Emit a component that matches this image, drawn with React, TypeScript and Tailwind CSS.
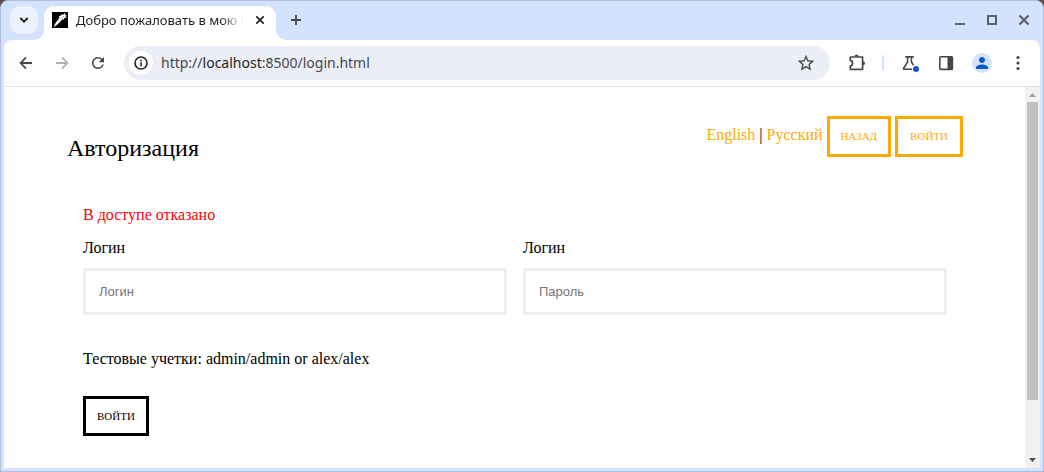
import React, { useState } from 'react';
import { MdRefresh, MdPerson, MdStarBorder } from 'react-icons/md';

interface ToolButtonProps {
  label: string;
  disabled?: boolean;
  children: React.ReactNode;
}

function ToolButton({ label, disabled, children }: ToolButtonProps) {
  return (
    <button
      type="button"
      aria-label={label}
      disabled={disabled}
      className="flex size-7 shrink-0 items-center justify-center rounded-full text-[#474747] disabled:text-[#b0b0b0]"
    >
      {children}
    </button>
  );
}

function Arrow({ flip = false }: { flip?: boolean }) {
  return (
    <svg width="16" height="16" viewBox="0 0 16 16" fill="none" stroke="currentColor" strokeWidth="1.8">
      <path d={flip ? 'M2 8H13M8 2.4L13.4 8L8 13.6' : 'M14 8H3M8 2.4L2.6 8L8 13.6'} />
    </svg>
  );
}

function Favicon() {
  return (
    <svg width="16" height="16" viewBox="0 0 16 16" className="shrink-0">
      <rect width="16" height="16" fill="#000" />
      <path d="M1.8 14.4L3.6 11L6.2 7.6L7.4 5.8L6.8 4.2L8.4 3.8L9.6 2.4L11 2.8L12.6 1.2L13.4 1.6L13 3L14.8 3.2L14 4.4L14.4 5.6L12.4 6L11.8 7.4L10 7.6L8.6 9.4L5.6 12.2L2.4 14.8Z" fill="#fff" />
      <path d="M8.8 5.2L10 6.4M11 4L11.8 4.8M6.6 8.8L7.4 9.4" stroke="#000" strokeWidth="0.5" />
    </svg>
  );
}

function TabStrip() {
  return (
    <div className="flex h-[39px] items-start pl-[9px] pt-[5px]">
      <button type="button" aria-label="Поиск вкладок" className="flex size-7 items-center justify-center rounded-[10px] bg-[#ebf1fd] text-[#1f1f1f]">
        <svg width="10" height="10" viewBox="0 0 10 10" fill="none" stroke="currentColor" strokeWidth="1.8">
          <path d="M1.3 3L5 6.7L8.7 3" />
        </svg>
      </button>
      <svg width="10" height="10" viewBox="0 0 10 10" className="-ml-1 self-end" fill="#fff">
        <path d="M10 0V10H0A10 10 0 0 0 10 0Z" />
      </svg>
      <div className="flex h-full w-58 items-center gap-2 rounded-t-[10px] bg-white px-2 pb-1.5">
        <Favicon />
        <span className="min-w-0 flex-1 overflow-hidden whitespace-nowrap text-[13px] leading-7 text-[#1f1f1f] [mask-image:linear-gradient(to_right,#000_86%,transparent)]">
          Добро пожаловать в мою программу
        </span>
        <button type="button" aria-label="Закрыть вкладку" className="flex size-4 items-center justify-center text-[#1f1f1f]">
          <svg width="10" height="10" viewBox="0 0 10 10" fill="none" stroke="currentColor" strokeWidth="1.7">
            <path d="M1.3 1.3L8.7 8.7M8.7 1.3L1.3 8.7" />
          </svg>
        </button>
      </div>
      <svg width="10" height="10" viewBox="0 0 10 10" className="self-end" fill="#fff">
        <path d="M0 0V10H10A10 10 0 0 1 0 0Z" />
      </svg>
      <button type="button" aria-label="Новая вкладка" className="-ml-1 flex size-7 items-center justify-center text-[#474747]">
        <svg width="12" height="12" viewBox="0 0 12 12" fill="none" stroke="currentColor" strokeWidth="1.8">
          <path d="M6 1V11M1 6H11" />
        </svg>
      </button>

      <div className="ml-auto flex gap-1 pr-[5px] text-[#5b6169]">
        <button type="button" aria-label="Свернуть" className="flex size-7 items-center justify-center">
          <svg width="12" height="12" viewBox="0 0 12 12" fill="currentColor">
            <path d="M1 9H11V11H1Z" />
          </svg>
        </button>
        <button type="button" aria-label="Развернуть" className="flex size-7 items-center justify-center">
          <svg width="12" height="12" viewBox="0 0 12 12" fill="none" stroke="currentColor" strokeWidth="2">
            <path d="M2 2H10V10H2Z" />
          </svg>
        </button>
        <button type="button" aria-label="Закрыть" className="flex size-7 items-center justify-center">
          <svg width="12" height="12" viewBox="0 0 12 12" fill="none" stroke="currentColor" strokeWidth="2.2">
            <path d="M1.5 1.5L10.5 10.5M10.5 1.5L1.5 10.5" />
          </svg>
        </button>
      </div>
    </div>
  );
}

function Toolbar() {
  return (
    <div className="flex h-[47px] items-center gap-2 rounded-t-lg border-b border-[#dfe1e5] bg-white px-2">
      <ToolButton label="Назад">
        <Arrow />
      </ToolButton>
      <ToolButton label="Вперёд" disabled>
        <Arrow flip />
      </ToolButton>
      <ToolButton label="Обновить">
        <MdRefresh size={18} />
      </ToolButton>

      <div className="ml-1 mr-[5px] flex h-[34px] min-w-0 flex-1 items-center rounded-full bg-[#ebeef7] pl-[5px] pr-2.5 text-sm">
        <span className="flex size-6 shrink-0 items-center justify-center rounded-full bg-white text-[#1f1f1f]">
          <svg width="14" height="14" viewBox="0 0 14 14" fill="none" stroke="currentColor" strokeWidth="1.6">
            <circle cx="7" cy="7" r="6" />
            <path d="M7 6.2V10.2M7 3.8V5.3" />
          </svg>
        </span>
        <span className="ml-2 flex-1 truncate text-[#474747]">
          http://<span className="text-[#1f1f1f]">localhost</span>:8500/login.html
        </span>
        <ToolButton label="Добавить в закладки">
          <MdStarBorder size={20} />
        </ToolButton>
      </div>

      <ToolButton label="Расширения">
        <svg width="18" height="18" viewBox="0 0 18 18" fill="none" stroke="currentColor" strokeWidth="1.7">
          <path d="M2.3 3H14.6V15.4H2.3V12C3.8 11.7 4.6 10.7 4.6 9.2S3.8 6.7 2.3 6.4Z" strokeLinejoin="round" />
          <path d="M6.6 2.6A2 2 0 0 1 10.6 2.6ZM15 7.2A2 2 0 0 1 15 11.2Z" fill="currentColor" stroke="none" />
        </svg>
      </ToolButton>
      <span className="ml-[3px] mr-1 h-4 w-[2px] rounded-full bg-[#d3e3fd]" />
      <ToolButton label="Эксперименты">
        <svg width="18" height="18" viewBox="0 0 18 18" fill="none">
          <path d="M4.2 2.9H12.8M6.6 3V8L2.6 14.2Q2.2 15.3 3.3 15.3H11M10.4 3V8L12.6 11.2" stroke="currentColor" strokeWidth="1.6" />
          <circle cx="15" cy="15" r="3" fill="#0b57d0" />
        </svg>
      </ToolButton>
      <ToolButton label="Боковая панель">
        <svg width="16" height="16" viewBox="0 0 16 16" fill="none">
          <rect x="1.8" y="1.8" width="12.6" height="12.6" rx="1" stroke="currentColor" strokeWidth="1.6" />
          <path d="M9.5 1.5H14.5V14.5H9.5Z" fill="currentColor" />
        </svg>
      </ToolButton>
      <ToolButton label="Профиль">
        <span className="flex size-5 items-center justify-center rounded-full bg-[#d3e3fd] text-[#0b57d0]">
          <MdPerson size={18} />
        </span>
      </ToolButton>
      <ToolButton label="Меню">
        <svg width="16" height="16" viewBox="0 0 16 16" fill="currentColor">
          <circle cx="8" cy="2.5" r="1.6" />
          <circle cx="8" cy="8" r="1.6" />
          <circle cx="8" cy="13.5" r="1.6" />
        </svg>
      </ToolButton>
    </div>
  );
}

function LoginPage() {
  const [login, setLogin] = useState('');
  const [password, setPassword] = useState('');

  return (
    <main className="min-w-0 flex-1 overflow-hidden bg-white pl-[63px] pr-[62px] pt-[29px] font-['Liberation_Serif',serif] text-base text-black">
      <header className="flex items-start justify-between">
        <h1 className="mt-3.5 text-2xl leading-9">Авторизация</h1>
        <nav className="flex items-baseline gap-1 text-[#ffaa00]">
          <span>
            <a href="#en">English</a> <span className="text-black">|</span> <a href="#ru">Русский</a>
          </span>
          <button type="button" className="h-[41px] border-3 border-[#ffaa00] px-[11px] text-[11px] uppercase">
            Назад
          </button>
          <button type="button" className="h-[41px] border-3 border-[#ffaa00] px-3 text-[11px] uppercase">
            Войти
          </button>
        </nav>
      </header>

      <form className="px-4 pt-[37px]" onSubmit={(e) => e.preventDefault()}>
        <p className="text-[#ff0000]">В доступе отказано</p>
        <div className="mt-[9px] grid grid-cols-2 gap-4">
          <div>
            <label htmlFor="login" className="block">Логин</label>
            <input
              id="login"
              type="text"
              value={login}
              onChange={(e) => setLogin(e.target.value)}
              placeholder="Логин"
              className="mt-2 h-[47px] w-full border-3 border-[#eeeeee] px-[13px] font-['Liberation_Sans',sans-serif] text-[13px] outline-none placeholder:text-[#757575]"
            />
          </div>
          <div>
            <label htmlFor="password" className="block">Логин</label>
            <input
              id="password"
              type="password"
              value={password}
              onChange={(e) => setPassword(e.target.value)}
              placeholder="Пароль"
              className="mt-2 h-[47px] w-full border-3 border-[#eeeeee] px-[13px] font-['Liberation_Sans',sans-serif] text-[13px] outline-none placeholder:text-[#757575]"
            />
          </div>
        </div>
        <p className="mt-8">Тестовые учетки: admin/admin or alex/alex</p>
        <button type="submit" className="mt-[25px] h-10 border-3 border-black px-[11px] text-[11px] uppercase">
          Войти
        </button>
      </form>
    </main>
  );
}

function Scrollbar() {
  return (
    <div className="flex w-[15px] shrink-0 flex-col items-center bg-[#f1f1f1]" aria-hidden="true">
      <svg width="15" height="15" viewBox="0 0 15 15" className="shrink-0" fill="#a3a3a3">
        <path d="M4 10L7.5 6L11 10Z" />
      </svg>
      <div className="w-full min-h-0 flex-1 px-[2px]">
        <div className="h-[85%] bg-[#c1c1c1]" />
      </div>
      <svg width="15" height="15" viewBox="0 0 15 15" className="shrink-0" fill="#505050">
        <path d="M4 5L7.5 9L11 5Z" />
      </svg>
    </div>
  );
}

export default function App() {
  return (
    <div className="h-screen bg-[#5a4f4f] font-['Noto_Sans',sans-serif]">
      <div className="flex h-full flex-col overflow-hidden rounded-t-lg border border-[#b1bfda] bg-[#d3e3fd]">
        <TabStrip />
        <div className="mx-[3px] mb-[3px] flex min-h-0 flex-1 flex-col">
          <Toolbar />
          <div className="flex min-h-0 flex-1">
            <LoginPage />
            <Scrollbar />
          </div>
        </div>
      </div>
    </div>
  );
}
